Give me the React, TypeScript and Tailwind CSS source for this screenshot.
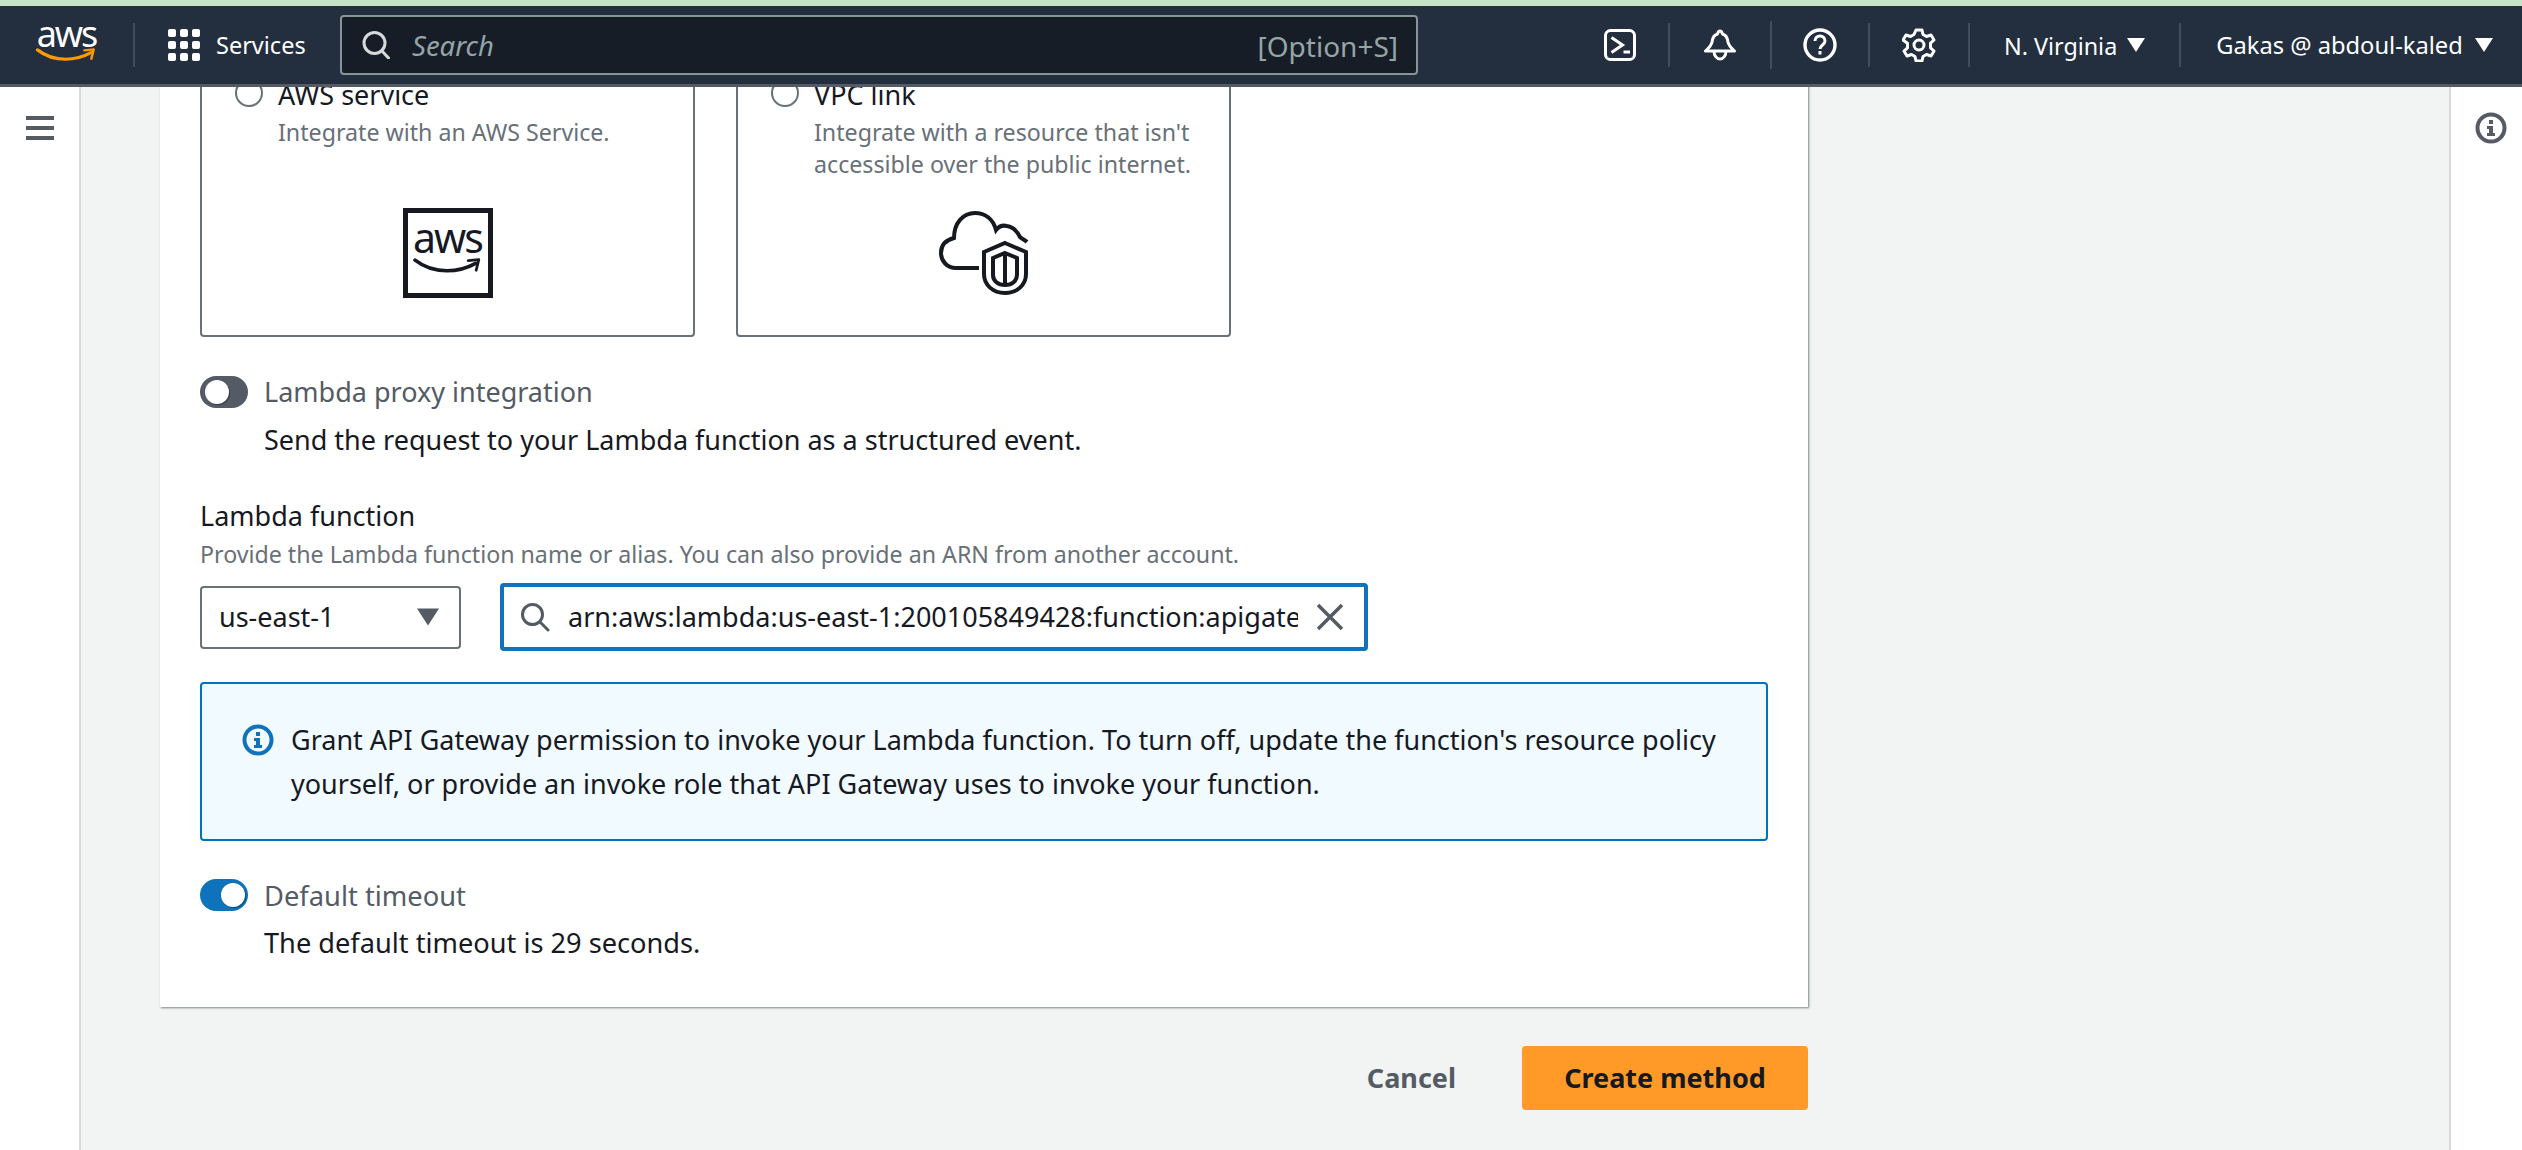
import React from "react";

const font = "font-['Noto_Sans','Liberation_Sans',sans-serif]";

function Caret({ className }: { className: string }) {
  return (
    <svg viewBox="0 0 18 14" className={className} fill="currentColor">
      <path d="M0 0h18L9 14z" />
    </svg>
  );
}

function Divider({ tall }: { tall?: boolean }) {
  return <div className={`w-[2px] bg-[#414d5c] ${tall ? "h-[48px]" : "h-[44px]"}`} />;
}

function Smile({ color, className }: { color: string; className: string }) {
  return (
    <svg viewBox="0 0 64 16" className={className} fill="none">
      <path d="M1 2c9 7 20 10 30 10 9 0 18-2 27-7" stroke={color} strokeWidth="3.4" strokeLinecap="round" />
      <path d="M51 2.5l10-1-2.5 10" stroke={color} strokeWidth="2.6" strokeLinejoin="round" strokeLinecap="round" />
    </svg>
  );
}

function Header() {
  return (
    <header className="relative z-10 h-[81px] bg-[#232f3e] border-b-[3px] border-[#545b64] flex items-center shrink-0 text-white">
      <div className="w-[133px] h-full flex flex-col items-center justify-center shrink-0">
        <span className="text-[36px] leading-[30px] -mt-[9px] tracking-[-2px]">aws</span>
        <Smile color="#f90" className="w-[63px] h-[15px] -mt-[1px]" />
      </div>
      <Divider />
      <div className="ml-[33px] w-[32px] h-[32px] grid grid-cols-3 gap-[4px] shrink-0">
        {Array.from({ length: 9 }).map((_, i) => (
          <span key={i} className="bg-white rounded-[2px]" />
        ))}
      </div>
      <span className="ml-[16px] mt-[2px] text-[23.500px] leading-none w-[124px] shrink-0">Services</span>
      <div className="w-[1078px] h-[60px] shrink-0 bg-[#161d26] border-2 border-[#879596] rounded-[4px] flex items-center pl-[20px] pr-[18px]">
        <svg viewBox="0 0 28 28" className="w-[28px] h-[28px]" fill="none" stroke="#d5dbdb" strokeWidth="3">
          <ellipse cx="12.5" cy="12" rx="10.5" ry="10.5" />
          <path d="M20 20l6.5 7" strokeLinecap="round" />
        </svg>
        <span className="ml-[22px] mt-[2px] italic text-[27.500px] text-[#95a5a6]">Search</span>
        <span className="ml-auto mt-[2px] text-[28px] text-[#95a5a6]">[Option+S]</span>
      </div>
      <div className="ml-[186px] w-[32px] h-[32px] shrink-0">
        <svg viewBox="0 0 32 32" className="w-[32px] h-[32px]" fill="none" stroke="#fff" strokeWidth="3">
          <rect x="1.5" y="1.500" width="29" height="29" rx="5" />
          <path d="M7.500 8.500l11 7.500-11 7.500" />
          <path d="M19.500 23H26" />
        </svg>
      </div>
      <div className="ml-[32px]"><Divider /></div>
      <div className="w-[100px] flex justify-center shrink-0">
        <svg viewBox="0 0 32 32" className="w-[32px] h-[32px]" fill="none" stroke="#fff" strokeWidth="3" strokeLinejoin="round">
          <path d="M16 2c-1.500 0-2 1-2.500 3C10 6 8.500 9 8 13c-.5 3-2 5-6.500 9h29c-4.500-4-6-6-6.500-9-.5-4-2-7-5.500-8-.5-2-1-3-2.500-3z" />
          <path d="M10 22c0 5 3 8 6 8s6-3 6-8" />
        </svg>
      </div>
      <Divider tall />
      <div className="w-[96px] flex justify-center shrink-0">
        <svg viewBox="0 0 34 34" className="w-[34px] h-[34px]" fill="none" stroke="#fff" strokeWidth="3.4">
          <circle cx="17" cy="17" r="15" />
          <path d="M12 13c0-3 2.200-5 5-5s5 2 5 5c0 4-5 4-5 8" strokeWidth="3" />
          <path d="M17 23v3.500" strokeWidth="3" />
        </svg>
      </div>
      <Divider />
      <div className="w-[98px] flex justify-center shrink-0">
        <svg viewBox="0 0 34 34" className="w-[34px] h-[34px]" fill="none" stroke="#fff" strokeWidth="3" strokeLinejoin="round">
          <path d="M14 2h6l1 4.500 3.500 2 4.500-1.500 3 5-3.500 3.200v4.600l3.500 3.200-3 5-4.500-1.500-3.500 2-1 4.500h-6l-1-4.500-3.500-2-4.500 1.500-3-5 3.500-3.200v-4.600L1 12l3-5 4.500 1.500 3.500-2z" />
          <circle cx="17" cy="17" r="5" />
        </svg>
      </div>
      <Divider />
      <span className="ml-[34px] mt-[2px] text-[23.300px] whitespace-nowrap">N. Virginia</span>
      <Caret className="ml-[10px] w-[18px] h-[14px] shrink-0" />
      <div className="ml-[34px]"><Divider /></div>
      <span className="ml-[35px] mt-[2px] text-[23.700px] whitespace-nowrap">Gakas @ abdoul-kaled</span>
      <Caret className="ml-[12px] w-[18px] h-[14px] shrink-0" />
    </header>
  );
}

function InfoIcon({ className, color }: { className: string; color: string }) {
  return (
    <svg viewBox="0 0 32 32" className={className} fill="none">
      <circle cx="16" cy="16" r="13.500" stroke={color} strokeWidth="4" />
      <path d="M14 8h4v4h-4zM12 14h6v7h2v3h-8v-3h2v-4h-2z" fill={color} />
    </svg>
  );
}

function Card({ title, desc, children }: { title: string; desc: React.ReactNode; children: React.ReactNode }) {
  return (
    <div className="w-[495px] h-[277px] border-2 border-[#687078] rounded-[4px] bg-white pl-[33px] pt-[13px] flex flex-col">
      <div className="flex items-center h-[36px]">
        <span className="w-[28px] h-[28px] rounded-full border-2 border-[#687078] shrink-0" />
        <span className="ml-[15px] mt-[3px] text-[27px] text-[#16191f] leading-[36px]">{title}</span>
      </div>
      <div className="ml-[43px] mt-[5px] text-[23.200px] leading-[32px] text-[#687078]">{desc}</div>
      <div className="flex-1 -ml-[33px]">{children}</div>
    </div>
  );
}

function Toggle({ on }: { on: boolean }) {
  return (
    <div className={`relative w-[48px] h-[32px] rounded-full shrink-0 ${on ? "bg-[#0f73bb]" : "bg-[#545b64]"}`}>
      <span
        className={`absolute top-[4px] w-[24px] h-[24px] rounded-full bg-white shadow-[1px_1px_1px_rgba(0,0,0,0.35)] ${
          on ? "right-[3px]" : "left-[5px]"
        }`}
      />
    </div>
  );
}

export default function App() {
  return (
    <div className={`${font} w-[2522px] h-[1150px] overflow-hidden flex flex-col bg-[#f2f3f3]`}>
      <div className="h-[6px] shrink-0 bg-[#c5e3c6]" />
      <Header />
      <div className="flex-1 flex min-h-0">
        <aside className="w-[81px] shrink-0 bg-white border-r-2 border-[#d5dbdb] pl-[26px] pt-[29px]">
          <div className="w-[28px] flex flex-col gap-[6px]">
            <span className="h-[4px] bg-[#545b64]" />
            <span className="h-[4px] bg-[#545b64]" />
            <span className="h-[4px] bg-[#545b64]" />
          </div>
        </aside>
        <main className="flex-1 pl-[79px] min-w-0">
          <div className="w-[1648px] h-[947px] -mt-[27px] bg-white shadow-[1px_1px_2px_rgba(0,28,36,0.5)] px-[40px]">
            <div className="flex gap-[41px]">
              <Card title="AWS service" desc="Integrate with an AWS Service.">
                <div className="flex justify-center mt-[60px]">
                  <div className="w-[90px] h-[90px] border-[5px] border-[#16191f] flex flex-col items-center text-[#16191f]">
                    <span className="text-[41px] leading-[32px] mt-[8px] tracking-[-2px]">aws</span>
                    <Smile color="#16191f" className="w-[74px] h-[17px] mt-[5px]" />
                  </div>
                </div>
              </Card>
              <Card
                title="VPC link"
                desc={<>Integrate with a resource that isn't<br />accessible over the public internet.</>}
              >
                <div className="flex justify-center mt-[31px]">
                  <svg viewBox="0 0 90 84" className="w-[90px] h-[84px]" fill="none" stroke="#16191f" strokeWidth="4">
                    <path d="M40 57H17C8 57 2 50 2 42c0-8 5-13 13-15C15 12 24 2 36 2c10 0 18 6 21 17 3-4 7-5 11-4 7 1 11 7 13 11 2 2 5 3 7 5" />
                    <path d="M66 32l21 9v22c0 11-9 19-21 19S45 74 45 63V41z" fill="#fff" />
                    <path d="M66 42l12 5v17c0 6-5 10-12 10s-12-4-12-10V47z" />
                    <path d="M66 42v32" />
                  </svg>
                </div>
              </Card>
            </div>

            <div className="flex items-center gap-[16px] mt-[39px] h-[32px]">
              <Toggle on={false} />
              <span className="text-[27px] text-[#545b64]">Lambda proxy integration</span>
            </div>
            <p className="ml-[64px] mt-[16px] h-[32px] text-[27px] leading-[32px] text-[#16191f]">
              Send the request to your Lambda function as a structured event.
            </p>

            <p className="mt-[42px] text-[27px] leading-[36px] text-[#16191f]">Lambda function</p>
            <p className="mt-[4px] text-[23.200px] leading-[32px] text-[#687078]">
              Provide the Lambda function name or alias. You can also provide an ARN from another account.
            </p>

            <div className="flex items-center gap-[39px] mt-[13px]">
              <div className="w-[261px] h-[63px] border-2 border-[#687078] rounded-[4px] flex items-center pl-[17px] pr-[20px]">
                <span className="text-[27px] text-[#16191f]">us-east-1</span>
                <Caret className="ml-auto w-[22px] h-[18px] text-[#545b64]" />
              </div>
              <div className="w-[868px] h-[68px] border-[4px] border-[#0f73bb] rounded-[4px] flex items-center pl-[16px] pr-[14px]">
                <svg viewBox="0 0 30 30" className="w-[30px] h-[30px] shrink-0" fill="none" stroke="#545b64" strokeWidth="3">
                  <circle cx="12.500" cy="12.500" r="10" />
                  <path d="M20 20l8 8" strokeLinecap="round" />
                </svg>
                <input
                  readOnly
                  value="arn:aws:lambda:us-east-1:200105849428:function:apigateway-lambda"
                  className="ml-[18px] w-[730px] bg-transparent outline-none text-[27px] text-[#16191f]"
                />
                <svg viewBox="0 0 28 28" className="ml-[18px] w-[28px] h-[28px] shrink-0" fill="none" stroke="#545b64" strokeWidth="3.5">
                  <path d="M2 2l24 24M26 2L2 26" />
                </svg>
              </div>
            </div>

            <div className="mt-[31px] w-[1568px] h-[159px] border-2 border-[#0073bb] rounded-[4px] bg-[#f1faff] pl-[40px] pr-[20px] pt-[34px] flex">
              <InfoIcon className="w-[32px] h-[32px] mt-[6px] shrink-0" color="#0f73bb" />
              <p className="ml-[17px] text-[27px] leading-[44px] text-[#16191f]">
                Grant API Gateway permission to invoke your Lambda function. To turn off, update the function's resource policy<br />
                yourself, or provide an invoke role that API Gateway uses to invoke your function.
              </p>
            </div>

            <div className="flex items-center gap-[16px] mt-[38px] h-[32px]">
              <Toggle on />
              <span className="mt-[2px] text-[27.300px] text-[#545b64]">Default timeout</span>
            </div>
            <p className="ml-[64px] mt-[16px] h-[32px] text-[27.200px] leading-[32px] text-[#16191f]">
              The default timeout is 29 seconds.
            </p>
          </div>
          <div className="w-[1648px] flex justify-end items-center mt-[39px]">
            <span className="text-[27px] font-bold text-[#545b64]">Cancel</span>
            <div className="ml-[66px] w-[286px] h-[64px] rounded-[4px] bg-[#ff9a28] flex items-center justify-center text-[27px] font-bold text-[#16191f]">
              Create method
            </div>
          </div>
        </main>
        <aside className="w-[73px] shrink-0 bg-white border-l-2 border-[#d5dbdb] flex justify-center pl-[8px] pt-[25px] items-start">
          <InfoIcon className="w-[32px] h-[32px]" color="#545b64" />
        </aside>
      </div>
    </div>
  );
}
